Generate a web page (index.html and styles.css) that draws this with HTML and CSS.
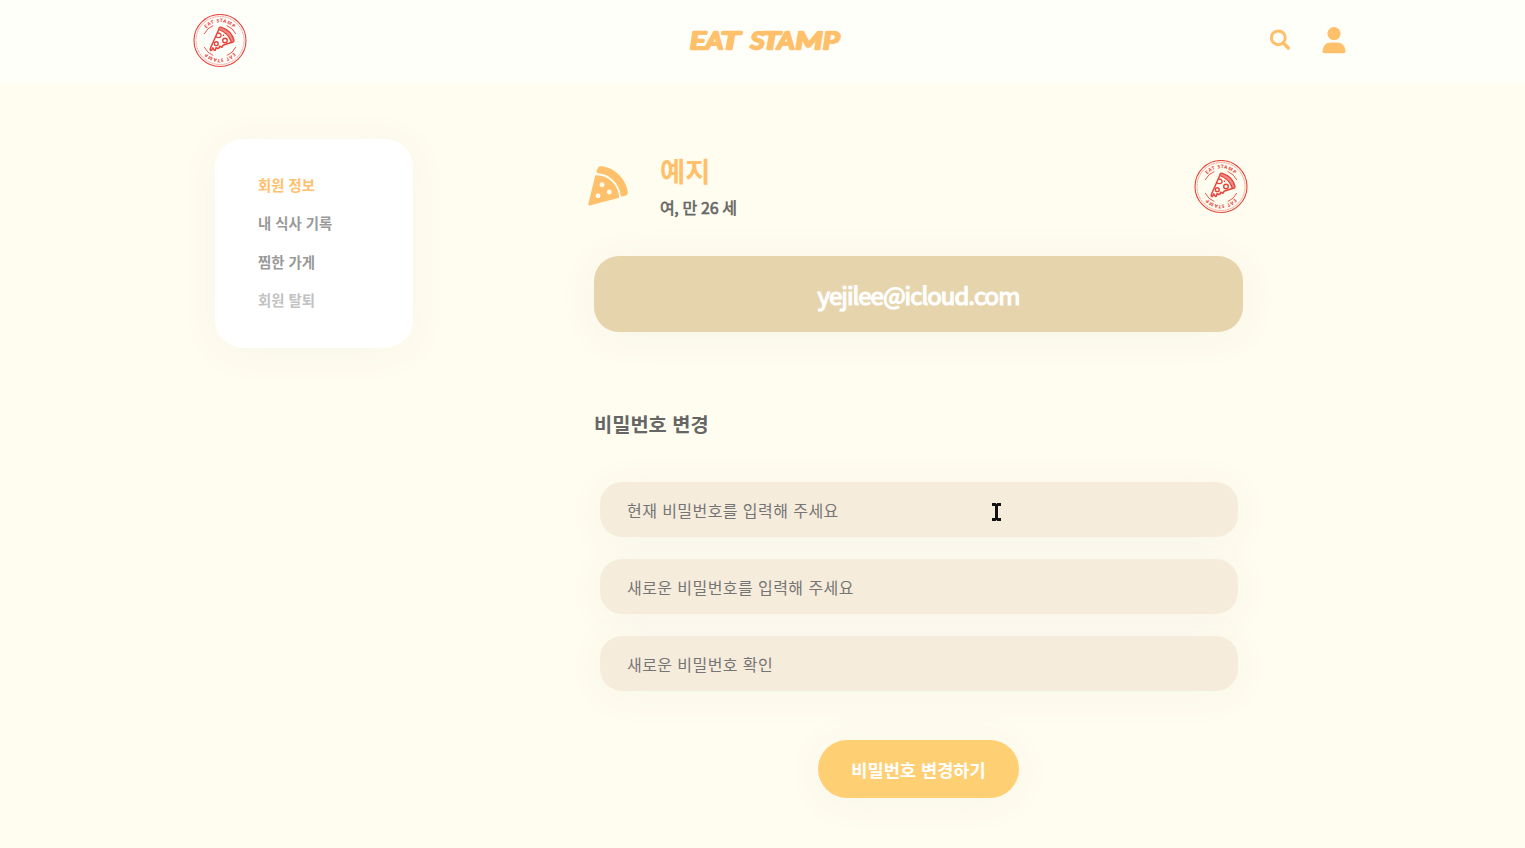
FILE: index.html
```html
<!DOCTYPE html>
<html lang="ko">
<head>
<meta charset="utf-8">
<title>EAT STAMP</title>
<link rel="stylesheet" href="styles.css">
</head>
<body>
<svg width="0" height="0" class="defs" aria-hidden="true">
  <defs>
    <path id="arc" d="M8.700 27a18.300 18.300 0 0 1 36.600 0"/>
    <symbol id="stamp" viewBox="0 0 54 54">
      <g fill="none" stroke="#e5433c">
        <circle cx="27" cy="26.500" r="26" stroke-width="1.1"/>
        <circle cx="27" cy="26.500" r="24" stroke-width=".8" opacity=".7" stroke-dasharray="1.200 .5"/>
        <path d="M11.200 20A17 17 0 0 1 20.300 11.500M33.700 11.500A17 17 0 0 1 42.800 20M11.200 33A17 17 0 0 0 20.300 41.500M33.700 41.500A17 17 0 0 0 42.800 33" stroke-width=".9"/>
        <path d="M25.800 15.500L17.300 34.500Q17 37 18.500 36.500L19.800 33.800L21.200 36.200Q22.600 37 23 33.700L25 34.500Q26.800 34 26.500 32.300L29 33.200L30 31.300L38.300 28.500" stroke-width="1.5" stroke-linejoin="round"/>
        <path d="M25.800 15.500Q25.600 12.900 27.800 13.200Q38.500 16.500 41 26.500Q41 28.700 38.500 28.500Q35.500 19 25.800 15.500Z" fill="#f08a84" stroke-width="1.300"/>
        <circle cx="32" cy="26.500" r="2.300" stroke-width="1.400"/>
        <circle cx="23.300" cy="29.700" r="1.900" stroke-width="1.400"/>
        <path d="M24.500 19Q28.500 19 28 22.300Q26.500 24.500 22.800 22.800M30.500 20.500V22" stroke-width="1.300"/>
      </g>
      <g class="stamp-text" transform="translate(0 -.5)">
        <text><textPath href="#arc" startOffset="50%">EAT STAMP</textPath></text>
        <text transform="rotate(180 27 27)"><textPath href="#arc" startOffset="50%">EAT STAMP</textPath></text>
      </g>
    </symbol>
  </defs>
</svg>
<header class="header">
  <a class="header-stamp"><svg class="stamp"><use href="#stamp"/></svg></a>
  <h1 class="brand"><svg width="164" height="44" viewBox="0 0 164 44"><g class="brand-text"><text x="6" y="29.500" textLength="16" lengthAdjust="spacingAndGlyphs">E</text><text x="22" y="29.500" textLength="17" lengthAdjust="spacingAndGlyphs">A</text><text x="37" y="30" textLength="19" lengthAdjust="spacingAndGlyphs">T</text><text x="66.500" y="29.500" textLength="14" lengthAdjust="spacingAndGlyphs">S</text><text x="78" y="30" textLength="18" lengthAdjust="spacingAndGlyphs">T</text><text x="93.500" y="29.500" textLength="17" lengthAdjust="spacingAndGlyphs">A</text><text x="111.500" y="29.500" textLength="27" lengthAdjust="spacingAndGlyphs">M</text><text x="139" y="30" textLength="16.500" lengthAdjust="spacingAndGlyphs">P</text></g></svg></h1>
  <nav class="tools">
    <svg class="search" viewBox="0 0 22 22"><circle cx="9.300" cy="8.800" r="6.900" fill="none" stroke="currentColor" stroke-width="3"/><path d="M14.300 14L19.300 19" stroke="currentColor" stroke-width="3.600" stroke-linecap="round"/></svg>
    <svg class="user" viewBox="0 0 24 27"><circle cx="12" cy="6.600" r="6.600" fill="currentColor"/><path d="M.5 24.500C.5 18.700 4.500 15.500 9 15.500H15C19.500 15.500 23.500 18.700 23.500 24.500Q23.500 26.300 21.900 26.300H2.100Q.5 26.300 .5 24.500Z" fill="currentColor"/></svg>
  </nav>
</header>
<main class="page">
  <aside class="menu">
    <a class="active">회원 정보</a>
    <a>내 식사 기록</a>
    <a>찜한 가게</a>
    <a class="leave">회원 탈퇴</a>
  </aside>
  <section class="content">
    <div class="profile">
      <svg class="pizza" viewBox="0 0 40 40"><path fill="currentColor" d="M9.600 2.500Q10.400 0 13 .3C27 1.500 38.500 13.500 39.900 26.700Q40 28.900 38 29.400L34.200 30.400Q32.900 30.700 32.700 29.300C31.500 17.500 21.700 7.900 9.900 7.200Q8.200 7 8.500 5.600Z"/><path fill="currentColor" fill-rule="evenodd" d="M8.500 9.300C20.500 9.500 30 18.700 31.100 30.500Q31.200 31.600 30.200 31.900L1.800 39.400Q0 39.700 .3 38L7 10.500Q7.300 9.300 8.500 9.300ZM14 16.300a2.400 2.400 0 1 0 .01 0ZM21.300 23.600a2.400 2.400 0 1 0 .01 0ZM10 27.300a2.400 2.400 0 1 0 .01 0Z"/></svg>
      <div class="identity">
        <h2 class="name">예지</h2>
        <p class="info">여, 만 26 세</p>
      </div>
      <svg class="stamp"><use href="#stamp"/></svg>
    </div>
    <div class="email">yejilee@icloud.com</div>
    <h3 class="title">비밀번호 변경</h3>
    <form class="form">
      <div class="field"><input type="password" placeholder="현재 비밀번호를 입력해 주세요">
        <svg class="cursor" viewBox="0 0 9 18"><path d="M0 0H4L4.500 1L5 0H9V3H6V15H9V18H5L4.500 17L4 18H0V15H3V3H0Z" fill="#111"/></svg>
      </div>
      <div class="field"><input type="password" placeholder="새로운 비밀번호를 입력해 주세요"></div>
      <div class="field"><input type="password" placeholder="새로운 비밀번호 확인"></div>
      <button class="submit" type="button">비밀번호 변경하기</button>
    </form>
  </section>
</main>
</body>
</html>
```
FILE: styles.css
```css
* { box-sizing: border-box; }
body {
  margin: 0;
  height: 848px;
  overflow: hidden;
  background: #fffdef;
  color: #666;
  font-family: "Noto Sans CJK KR", "Noto Sans", sans-serif;
}
.defs { position: absolute; }
svg { display: block; }
h1, h2, h3, p { margin: 0; }
.header {
  height: 84px;
  padding: 0 179px 3px 193px;
  display: grid;
  grid-template-columns: 1fr 164px 1fr;
  align-items: center;
  background: #fffffa;
  color: #ffc06c;
}
.stamp { width: 54px; height: 54px; }
.stamp-text {
  font: 700 4.8px "Noto Sans", sans-serif;
  letter-spacing: .6px;
  fill: #e5433c;
  text-anchor: middle;
}
.brand { height: 44px; margin-left: -4px; }
.brand svg { overflow: visible; }
.brand-text {
  font: italic 400 23.5px Lato, sans-serif;
  fill: #ffc06c;
  stroke: #ffc06c;
  stroke-width: 2.6px;
  stroke-linejoin: round;
}
.tools {
  display: flex;
  justify-content: flex-end;
  align-items: center;
  gap: 31px;
}
.search { width: 22px; height: 22px; margin-top: -2px; }
.user { width: 24px; height: 27px; }
.page {
  display: flex;
  align-items: flex-start;
  padding: 55px 0 0 215px;
}
.menu {
  width: 198px;
  height: 209px;
  padding: 27px 43px;
  border-radius: 28px;
  background: #fff;
  box-shadow: 0 4px 40px rgba(120, 80, 150, .05);
  display: flex;
  flex-direction: column;
  color: #999;
  font-size: 14.4px;
  font-weight: 700;
  line-height: 38.4px;
  white-space: nowrap;
}
.active { color: #ffc06c; }
.leave { color: #c2c2c2; }
.content { width: 649px; margin-left: 181px; }
.profile {
  height: 117px;
  margin: 0 -5px 0 -6px;
  display: flex;
  align-items: flex-start;
  color: #ffc06c;
}
.pizza { width: 40px; height: 40px; margin-top: 27px; }
.identity { flex: 1; padding: 11px 0 0 32px; }
.name { font-size: 27.4px; line-height: 40px; }
.info {
  margin-top: 5px;
  font-size: 16px;
  line-height: 24px;
  font-weight: 400;
  letter-spacing: -.35px;
  -webkit-text-stroke: .6px #666;
  color: #666;
}
.profile .stamp { margin-top: 21px; }
.email {
  height: 76px;
  border-radius: 25px;
  background: #e6d4ac;
  box-shadow: 0 4px 40px rgba(120, 80, 150, .06);
  color: #fff;
  font-size: 24px;
  font-weight: 400;
  -webkit-text-stroke: 1.2px #fff;
  letter-spacing: -1px;
  line-height: 77px;
  text-align: center;
}
.title { margin-top: 76px; font-size: 19.8px; line-height: 31px; color: #666; }
.form {
  margin-top: 43px;
  padding: 0 5px 0 6px;
  display: flex;
  flex-direction: column;
  align-items: center;
}
.field { position: relative; width: 100%; height: 55px; margin-bottom: 22px; }
.field input {
  display: block;
  width: 100%;
  height: 55px;
  padding: 0 27px;
  border: 0;
  border-radius: 22px;
  background: #f6ecdc;
  box-shadow: 0 4px 40px rgba(120, 80, 150, .05);
  font: 400 16px "Noto Sans CJK KR", sans-serif;
  letter-spacing: .43px;
}
.field input::placeholder { color: #757575; }
.cursor { position: absolute; left: 392px; top: 21px; width: 9px; height: 18px; }
.submit {
  width: 201px;
  height: 58px;
  margin: 27px 1px 0 0;
  padding: 0;
  border: 0;
  border-radius: 29px;
  background: #ffd073;
  box-shadow: 0 4px 40px rgba(120, 80, 150, .05);
  color: #fff;
  font: 700 17.6px "Noto Sans CJK KR", sans-serif;
}
```
